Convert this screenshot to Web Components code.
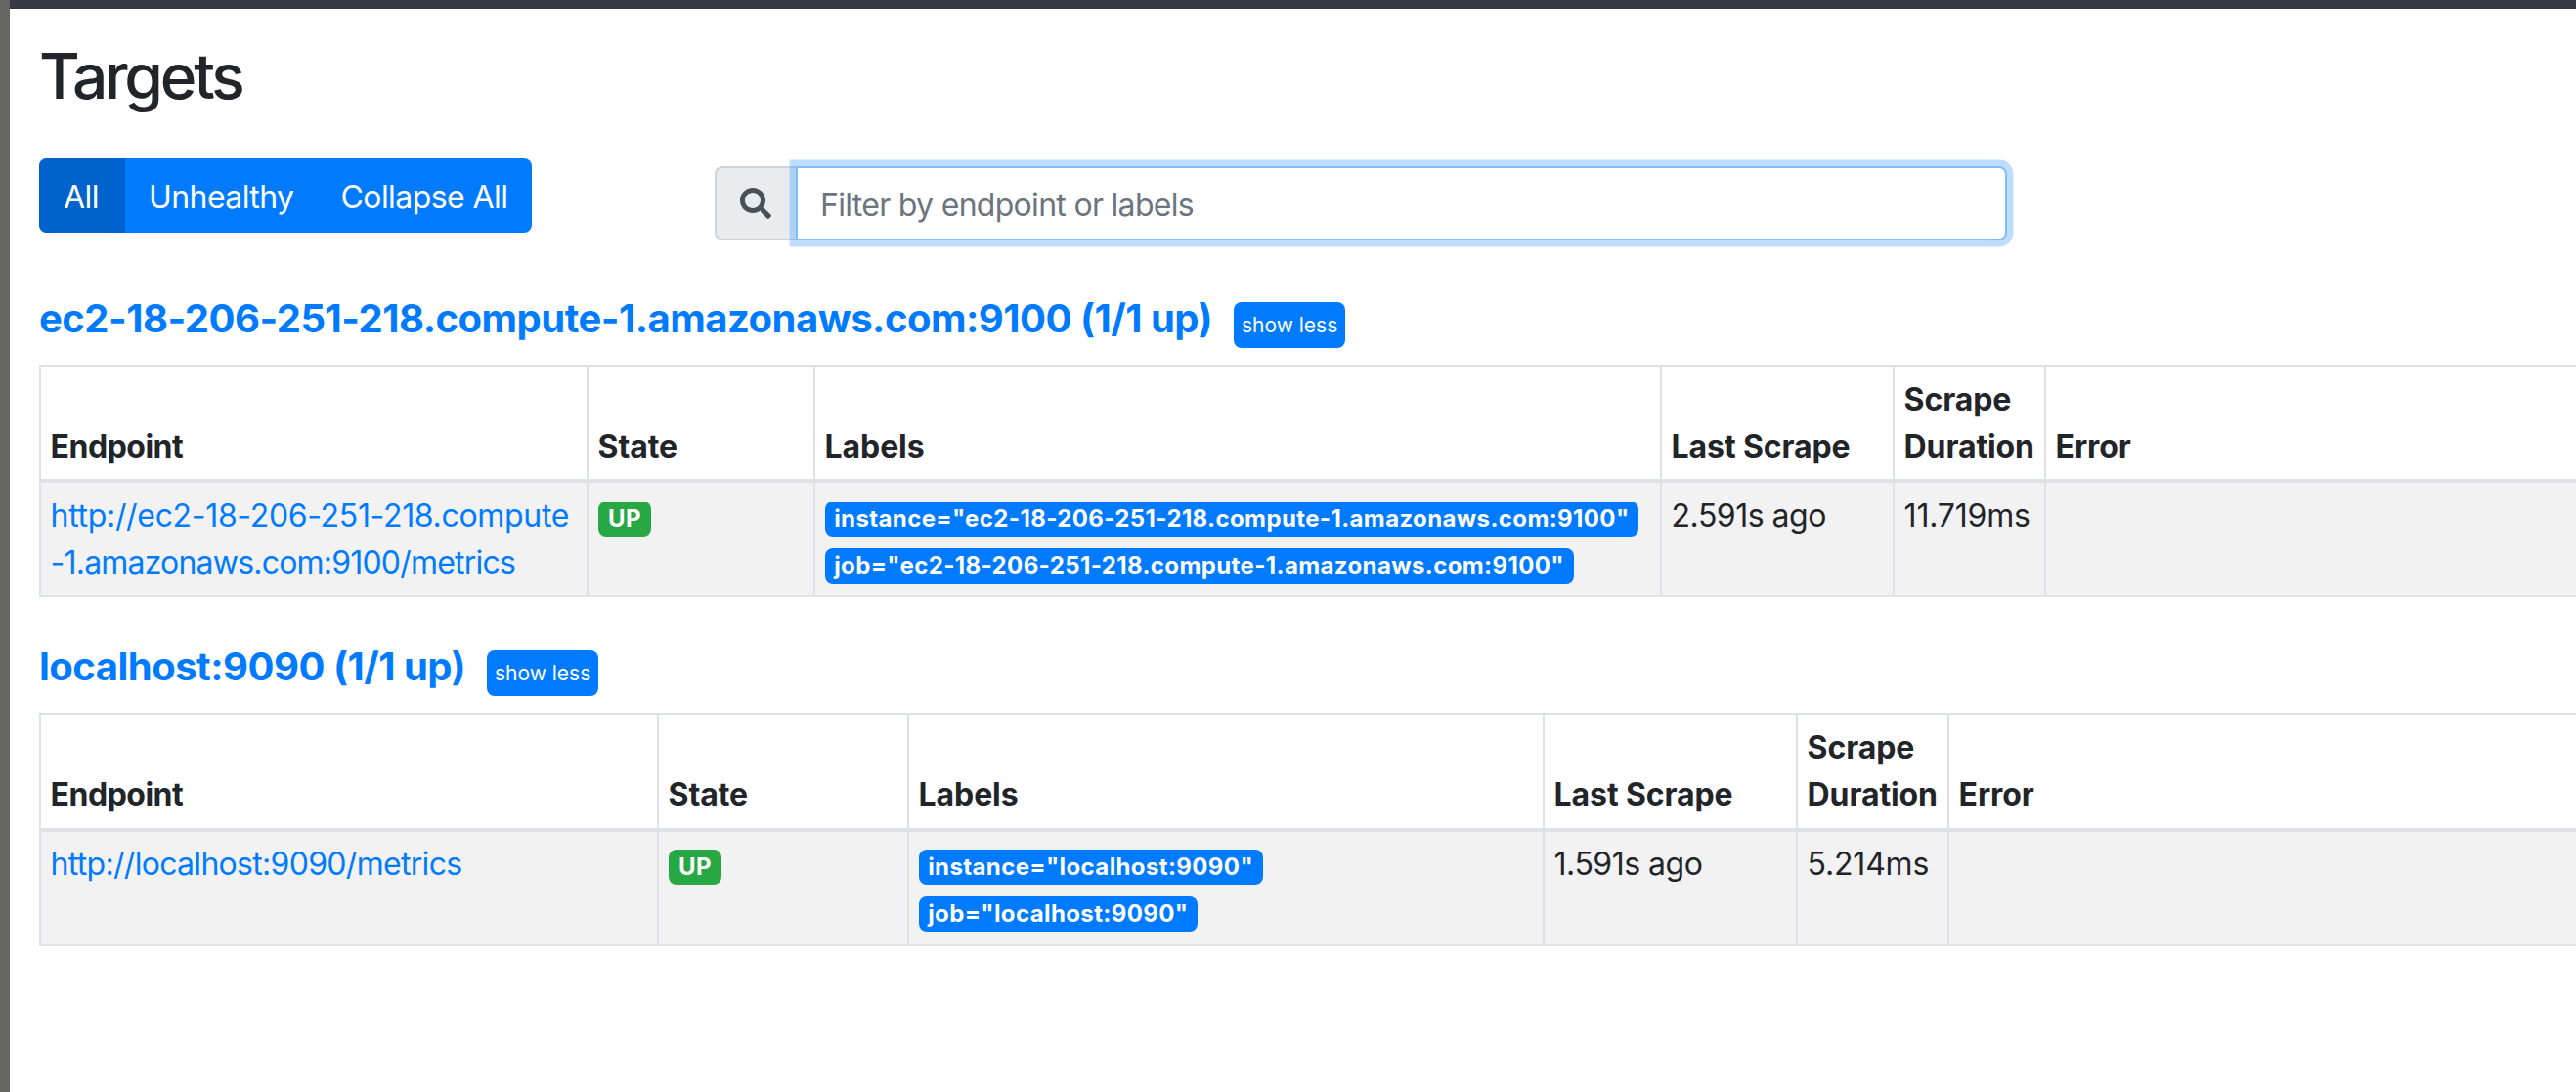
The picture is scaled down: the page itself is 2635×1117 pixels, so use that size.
<!DOCTYPE html>
<html lang="en">
<head>
<meta charset="utf-8">
<title>Targets</title>
<style>
  html, body { margin: 0; height: 100%; overflow: hidden; background: #fff; }
  body { font-family: Inter, "Liberation Sans", sans-serif; font-size: 32px; line-height: 48px; color: #212529; }
</style>
</head>
<body>
<app-frame>
  <h-title>Targets</h-title>
  <filter-bar></filter-bar>

  <scrape-pool name="ec2-18-206-251-218.compute-1.amazonaws.com:9100 (1/1 up)" widths="560,232,866,238,155" scrape="2.591s ago" duration="11.719ms">
    <target-link slot="endpoint" href="#"><span style="letter-spacing:-.32px">http://ec2-18-206-251-218.compute</span><br><span style="letter-spacing:-.8px">-1.amazonaws.com:9100/metrics</span></target-link>
    <label-badge slot="labels">instance="ec2-18-206-251-218.compute-1.amazonaws.com:9100"</label-badge>
    <label-badge slot="labels">job="ec2-18-206-251-218.compute-1.amazonaws.com:9100"</label-badge>
  </scrape-pool>

  <scrape-pool name="localhost:9090 (1/1 up)" widths="632,256,650,259,155" scrape="1.591s ago" duration="5.214ms">
    <target-link slot="endpoint" href="#"><span style="letter-spacing:-.7px">http://localhost:9090/metrics</span></target-link>
    <label-badge slot="labels">instance="localhost:9090"</label-badge>
    <label-badge slot="labels">job="localhost:9090"</label-badge>
  </scrape-pool>
</app-frame>

<script>
// tweak for the whole page, Inter runs wider than the font of the screenshot
const TRACK = "-0.018em";

class AppFrame extends HTMLElement {
  constructor() {
    super();
    const root = this.attachShadow({ mode: "open" });
    root.innerHTML = `
      <style>
        :host { display: grid; grid-template-columns: 10px 1fr; grid-template-rows: 9px 1fr; height: 100vh; }
        .side { grid-row: 1 / 3; background: #656661; }
        .top { background: #353a42; }
        main { padding: 0 0 0 30px; min-width: 0; overflow: hidden; letter-spacing: ${TRACK}; }
      </style>
      <div class="side"></div>
      <div class="top"></div>
      <main><slot></slot></main>`;
  }
}

class HTitle extends HTMLElement {
  constructor() {
    super();
    const root = this.attachShadow({ mode: "open" });
    root.innerHTML = `
      <style>
        :host { display: block; padding-top: 30px; margin-bottom: 46px; }
        h2 { margin: 0; font-size: 64px; line-height: 77px; font-weight: 500; letter-spacing: -0.05em; }
      </style>
      <h2><slot></slot></h2>`;
  }
}

class FilterBar extends HTMLElement {
  constructor() {
    super();
    const root = this.attachShadow({ mode: "open" });
    root.innerHTML = `
      <style>
        :host { display: flex; align-items: flex-start; padding-bottom: 9px; }
        .group { display: flex; width: 504px; height: 76px; border-radius: 8px; overflow: hidden; background: #007bff; color: #fff; }
        .group span { display: block; flex: none; padding: 16px 25px 0; white-space: nowrap; }
        .group .on { box-sizing: border-box; background: #0062cc; padding: 16px 0 0 25px; width: 88px; }
        .group .mid { padding: 16px 23px 0 24px; }
        .search { display: flex; margin: 8px 0 0 187px; width: 1322px; height: 76px; }
        .icon { box-sizing: border-box; width: 83px; border: 2px solid #ced4da; border-right: 0; background: #e9ecef; border-radius: 8px 0 0 8px; display: flex; align-items: center; justify-content: center; }
        .icon svg { width: 32px; height: 32px; fill: #495057; margin-left: -2px; }
        .field { box-sizing: border-box; flex: 1; margin: 0; border: 2px solid #80bdff; border-radius: 0 8px 8px 0; padding: 2px 24px 0 23px; background: #fff; color: #6c757d; line-height: 72px; letter-spacing: -0.7px; box-shadow: 0 0 0 6.4px rgba(0,123,255,.25); }
      </style>
      <div class="group"><span class="on">All</span><span class="mid">Unhealthy</span><span>Collapse All</span></div>
      <div class="search">
        <div class="icon"><svg viewBox="0 0 512 512"><path d="M505 442.7L405.3 343c-4.5-4.5-10.6-7-17-7H372c27.6-35.3 44-79.7 44-128C416 93.1 322.9 0 208 0S0 93.1 0 208s93.1 208 208 208c48.3 0 92.7-16.4 128-44v16.3c0 6.4 2.5 12.5 7 17l99.7 99.7c9.4 9.4 24.6 9.4 33.9 0l28.3-28.3c9.4-9.4 9.4-24.6.1-34zM208 336c-70.7 0-128-57.2-128-128 0-70.7 57.2-128 128-128 70.7 0 128 57.2 128 128 0 70.7-57.2 128-128 128z"/></svg></div>
        <div class="field">Filter by endpoint or labels</div>
      </div>`;
  }
}

class ScrapePool extends HTMLElement {
  constructor() {
    super();
    const root = this.attachShadow({ mode: "open" });
    const widths = this.getAttribute("widths").split(",");
    const cols = widths.map(w => `<col style="width:${w}px">`).join("") + `<col>`;
    root.innerHTML = `
      <style>
        :host { display: block; width: 3000px; margin-top: 41px; }
        .head { display: flex; align-items: flex-end; height: 60px; margin-bottom: 17px; }
        h5 { margin: 0; font-size: 40px; line-height: 60px; font-weight: 700; color: #007bff; white-space: nowrap; letter-spacing: -0.51px; }
        button { all: unset; margin-left: 22px; width: 114px; height: 47px; text-align: center; border-radius: 8px; background: #007bff; color: #fff; font-size: 21px; line-height: 47px; letter-spacing: 0; }
        table { table-layout: fixed; width: 100%; border-collapse: separate; border-spacing: 0; border-top: 2px solid #dee2e6; border-left: 2px solid #dee2e6; }
        th, td { padding: 9.6px; border-right: 2px solid #dee2e6; border-bottom: 2px solid #dee2e6; text-align: left; vertical-align: top; white-space: nowrap; }
        th { font-weight: 700; vertical-align: bottom; border-bottom-width: 4px; letter-spacing: -0.1px; }
        th:first-child { letter-spacing: -0.5px; }
        td { background: #f2f2f2; }
        td:nth-child(4) { letter-spacing: -0.5px; }
        td:nth-child(5) { letter-spacing: -0.2px; }
        .up { display: inline-block; padding: 0 10.5px; height: 36px; line-height: 36px; border-radius: 8px; background: #28a745; color: #fff; font-size: 24px; font-weight: 700; letter-spacing: 0.3px; }
      </style>
      <div class="head"><h5>${this.getAttribute("name")}</h5><button>show less</button></div>
      <table>
        <colgroup>${cols}</colgroup>
        <thead><tr>
          <th>Endpoint</th><th>State</th><th>Labels</th><th>Last Scrape</th><th>Scrape<br>Duration</th><th>Error</th>
        </tr></thead>
        <tbody><tr>
          <td><slot name="endpoint"></slot></td>
          <td><span class="up">UP</span></td>
          <td><slot name="labels"></slot></td>
          <td>${this.getAttribute("scrape")}</td>
          <td>${this.getAttribute("duration")}</td>
          <td></td>
        </tr></tbody>
      </table>`;
  }
}

class TargetLink extends HTMLElement {
  constructor() {
    super();
    const root = this.attachShadow({ mode: "open" });
    root.innerHTML = `
      <style>
        :host { display: inline; }
        a { color: #007bff; text-decoration: none; }
      </style>
      <a href="${this.getAttribute("href")}"><slot></slot></a>`;
  }
}

class LabelBadge extends HTMLElement {
  constructor() {
    super();
    const root = this.attachShadow({ mode: "open" });
    root.innerHTML = `
      <style>
        :host { display: block; height: 48px; }
        span { display: inline-block; margin-top: 6px; padding: 0 9.6px; height: 36px; line-height: 36px; border-radius: 8px; background: #007bff; color: #fff; font-size: 24px; font-weight: 700; white-space: nowrap; letter-spacing: 0.38px; }
      </style>
      <span><slot></slot></span>`;
  }
}

customElements.define("app-frame", AppFrame);
customElements.define("h-title", HTitle);
customElements.define("filter-bar", FilterBar);
customElements.define("scrape-pool", ScrapePool);
customElements.define("target-link", TargetLink);
customElements.define("label-badge", LabelBadge);
</script>
</body>
</html>
